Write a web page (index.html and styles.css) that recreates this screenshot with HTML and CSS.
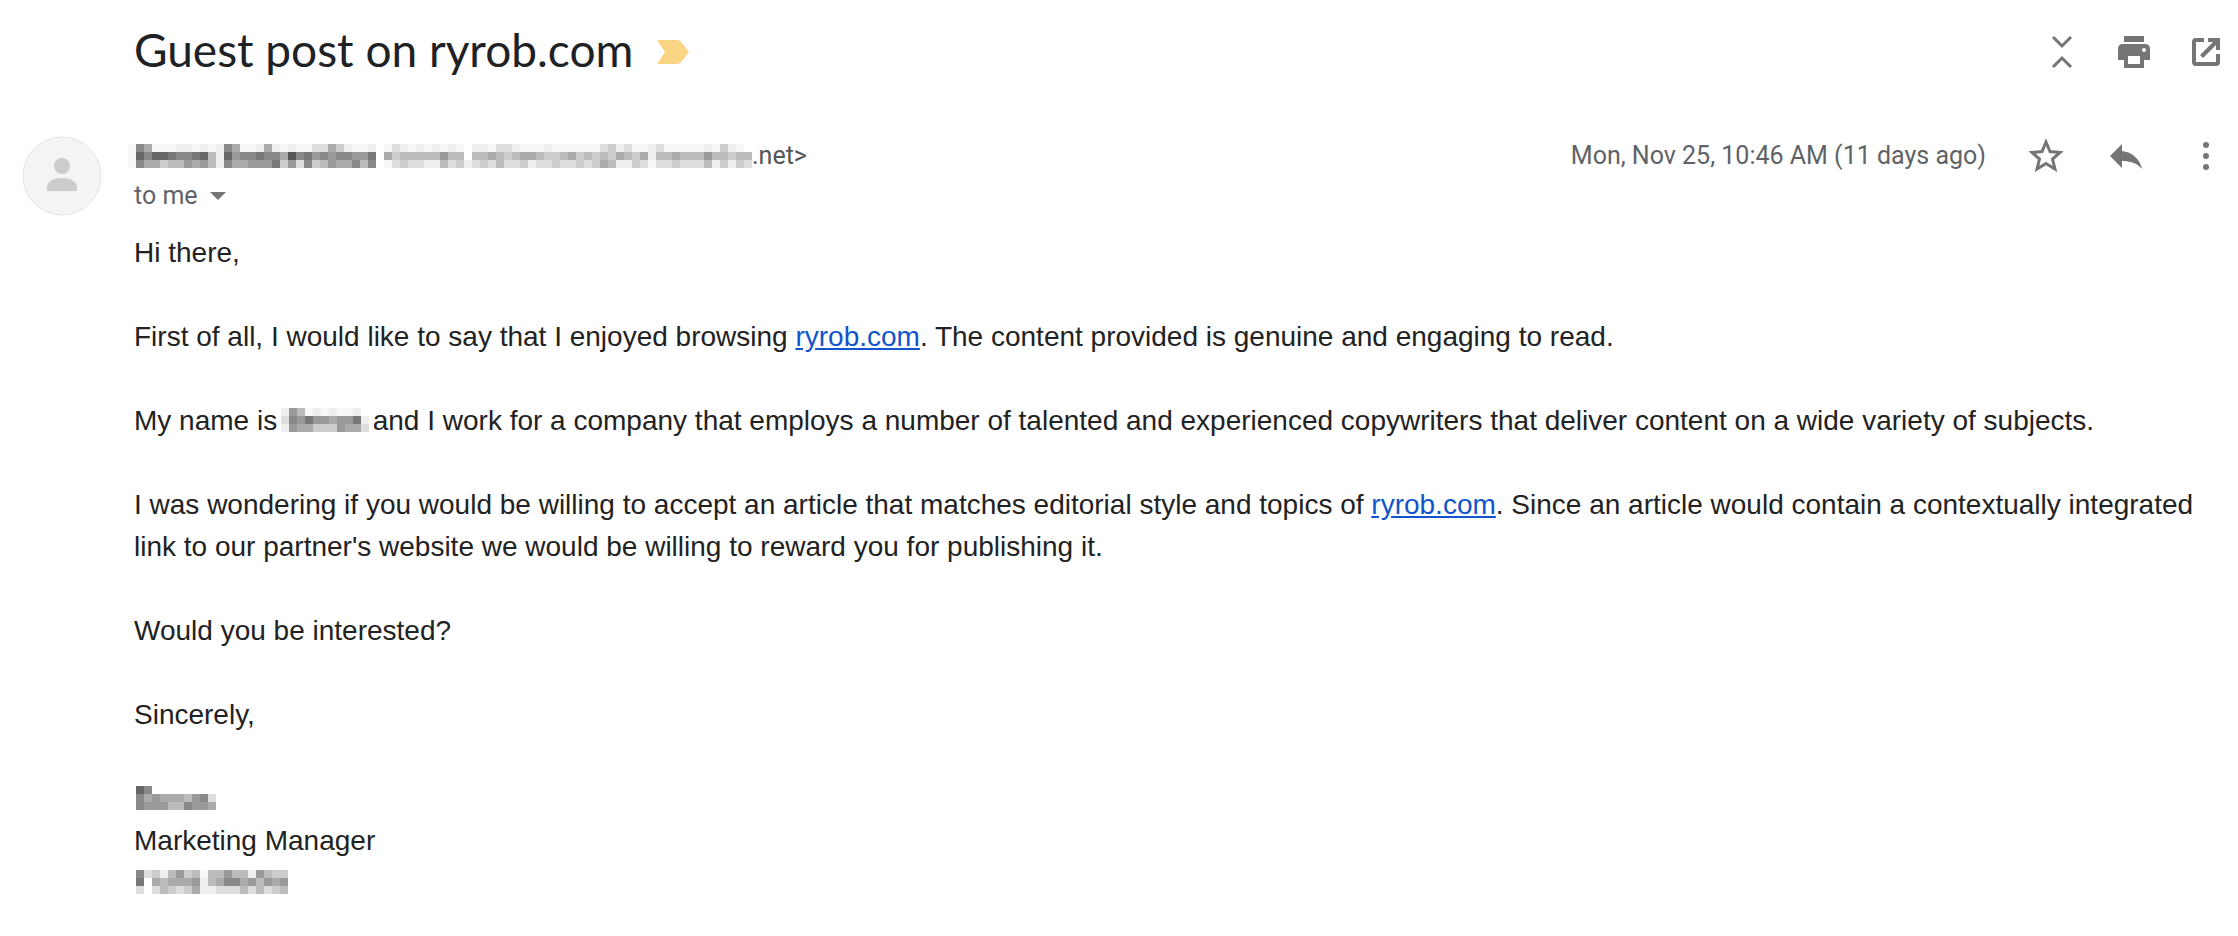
FILE: index.html
```html
<!DOCTYPE html>
<html lang="en">
<head>
<meta charset="utf-8">
<title>Guest post on ryrob.com</title>
<link rel="stylesheet" href="styles.css">
</head>
<body>
<main class="thread">
  <header class="subject-bar">
    <h1 class="subject">Guest post on ryrob.com</h1>
    <button class="importance" aria-label="Important"><svg width="32" height="24" viewBox="0 0 32 24"><path d="M0 0H20Q23 0 25 3L32 12L25 21Q23 24 20 24H0L8 12Z"/></svg></button>
    <div class="tools">
      <button class="icon" aria-label="Collapse all"><svg viewBox="0 0 40 40"><path class="line" d="M11 5L20 14L29 5M11 35L20 26L29 35"/></svg></button>
      <button class="icon" aria-label="Print"><svg viewBox="0 0 40 40"><path fill-rule="evenodd" d="M10 4H30V10H10ZM9 12H31Q36 12 36 17V28H30V36H10V28H4V17Q4 12 9 12ZM14 24V32H26V24ZM30 16A2 2 0 1 0 30 20A2 2 0 1 0 30 16Z"/></svg></button>
      <button class="icon" aria-label="Open in new window"><svg viewBox="0 0 40 40"><path d="M18 6H10Q6 6 6 10V30Q6 34 10 34H30Q34 34 34 30V22H30V30H10V10H18ZM22 6V10H27L14 23L17 26L30 13V18H34V6Z"/></svg></button>
    </div>
  </header>
  <article class="message">
    <svg class="avatar" viewBox="0 0 80 80" role="img" aria-label="Sender"><circle cx="40" cy="40" r="39"/><path d="M40 22A8 8 0 1 1 40 38A8 8 0 1 1 40 22ZM25 55V51C25 45 33 42 40 42S55 45 55 51V55Z"/></svg>
    <header class="meta">
      <div class="sender">
        <div class="from"><svg class="mosaic" data-rows="f 8afffeefefe 8affeaefeffddaceffe . fdefefefef . eefddefffeffffff dcedffedfffffefcef. / f 686678876be 6988788a58798988997 . acbbbbb9bb . bbabcbaabccbacbc bcabcaebbabbb9bbcbb / f 8aacbb9a9be 8aa9997c9d8cb9aa8b8 . fdcddeebdc e dcdbddceddcddcdc abeecdfddcdddbececd"></svg><span>.net&gt;</span></div>
        <button class="to">to me<svg width="16" height="8" viewBox="0 0 16 8"><path d="M0 0H16L8 8Z"/></svg></button>
      </div>
      <time class="date">Mon, Nov 25, 10:46 AM (11 days ago)</time>
      <div class="actions">
        <button class="icon" aria-label="Star"><svg viewBox="0 0 40 40"><path class="star" d="M20 6L24 15.500L34 16.500L26.500 23L29 33L20 27.500L11 33L13.500 23L6 16.500L16 15.500Z"/></svg></button>
        <button class="icon" aria-label="Reply"><svg viewBox="0 0 40 40"><path d="M16 15V8L4 20L16 32V25C24 25 31 27 36 33C34 23 26 16 16 15Z"/></svg></button>
        <button class="icon" aria-label="More"><svg viewBox="0 0 40 40"><circle cx="20" cy="9" r="3"/><circle cx="20" cy="20" r="3"/><circle cx="20" cy="31" r="3"/></svg></button>
      </div>
    </header>
    <div class="body">
      <p>Hi there,</p>
      <p>First of all, I would like to say that I enjoyed browsing <a href="#">ryrob.com</a>. The content provided is genuine and engaging to read.</p>
      <p>My name is <svg class="mosaic name" data-rows="e9bfefeffe./d89799a997e/e9aaccc9aad"></svg> and I work for a company that employs a number of talented and experienced copywriters that deliver content on a wide variety of subjects.</p>
      <p>I was wondering if you would be willing to accept an article that matches editorial style and topics of <a href="#">ryrob.com</a>. Since an article would contain a contextually integrated link to our partner's website we would be willing to reward you for publishing it.</p>
      <p>Would you be interested?</p>
      <p>Sincerely,</p>
      <p><svg class="mosaic edge" data-rows="68......../8a9aaab98d/8999bb899a"></svg><br>Marketing Manager<br><svg class="mosaic edge" data-rows="8dceb9cbfbb9bbe9bcc/7.abaaa9eba88a9b9a9/d.dbcdcaeedddbdbdcb"></svg></p>
    </div>
  </article>
</main>
<script src="mosaic.js"></script>
</body>
</html>
```
FILE: styles.css
```css
* { box-sizing: border-box; }
body { margin: 0; background: #fff; color: #222; font-family: "Liberation Sans", Arial, sans-serif; }
button { padding: 0; border: 0; background: none; font: inherit; color: inherit; cursor: pointer; }
svg { display: block; }
.thread { padding: 0 12px 24px 22px; }
.subject-bar { display: flex; align-items: center; height: 104px; padding-left: 112px; margin-bottom: 32px; }
.subject { margin: 0; padding-bottom: 4px; font: 400 46px/56px Lato, sans-serif; color: #202124; }
.importance { margin-left: 24px; fill: #fad584; }
.tools { display: flex; gap: 32px; margin-left: auto; }
.icon { width: 40px; height: 40px; fill: #757575; }
.line, .star { fill: none; stroke: #757575; stroke-width: 3; }
.message { display: grid; grid-template-columns: 80px 1fr; column-gap: 32px; row-gap: 16px; }
.avatar { width: 80px; height: 80px; fill: #ccc; }
.avatar circle { fill: #f4f4f4; stroke: #e4e4e4; }
.meta { display: flex; align-items: flex-start; font: 400 25px/40px Roboto, sans-serif; color: #5f6368; }
.sender { flex: 1; }
.from { display: flex; align-items: center; height: 40px; color: #555; }
.from .mosaic { margin-left: -6px; }
.to { display: flex; align-items: center; gap: 12px; height: 40px; }
.to svg { fill: #757575; }
.date { margin-right: 40px; }
.actions { display: flex; gap: 40px; }
.body { grid-column: 2; padding-right: 24px; font-size: 28px; line-height: 42px; }
.body p { margin: 0 0 42px; }
.body a { color: #15c; }
.body .mosaic { display: inline-block; vertical-align: -2px; }
.body .name { margin: 0 -4px; }
.body .edge { margin-left: 2px; }
```
FILE: mosaic.js
```javascript
// Each row is a string of grey levels, one hex digit per 8px tile; "." is an empty tile.
const TILE = 8;
document.querySelectorAll(".mosaic").forEach((svg) => {
  const rows = svg.dataset.rows.replace(/ /g, "").split("/");
  svg.setAttribute("width", Math.max(...rows.map((r) => r.length)) * TILE);
  svg.setAttribute("height", rows.length * TILE);
  svg.setAttribute("shape-rendering", "crispEdges");
  rows.forEach((row, y) => [...row].forEach((level, x) => {
    if (level === ".") return;
    const tile = document.createElementNS("http://www.w3.org/2000/svg", "rect");
    tile.setAttribute("x", x * TILE);
    tile.setAttribute("y", y * TILE);
    tile.setAttribute("width", TILE);
    tile.setAttribute("height", TILE);
    tile.setAttribute("fill", level === "f" ? "#f7f7f7" : "#" + level.repeat(3));
    svg.append(tile);
  }));
});
```
